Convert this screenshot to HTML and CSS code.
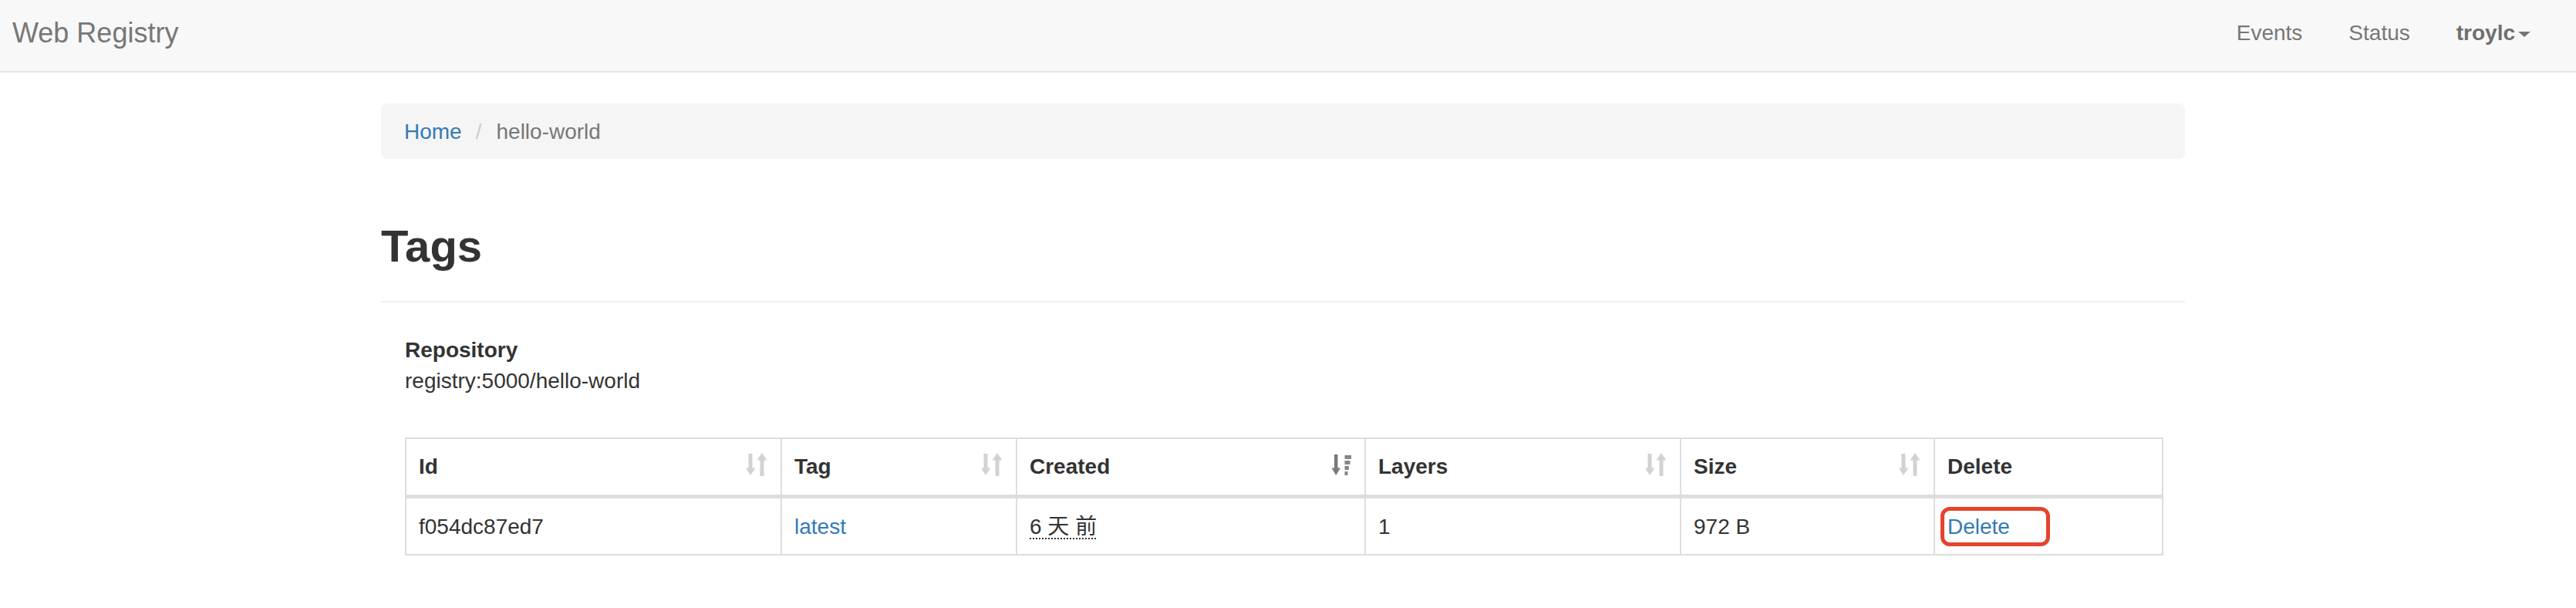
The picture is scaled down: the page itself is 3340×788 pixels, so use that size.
FILE: index.html
```html
<!DOCTYPE html>
<html lang="en">
<head>
<meta charset="utf-8">
<title>Web Registry</title>
<link rel="stylesheet" href="styles.css">
</head>
<body>
<header class="navbar">
  <a class="brand" href="#">Web Registry</a>
  <ul class="nav">
    <li><a href="#">Events</a></li>
    <li><a href="#">Status</a></li>
    <li><a class="user" href="#">troylc<span class="caret"></span></a></li>
  </ul>
</header>

<main class="container">
  <ol class="breadcrumb">
    <li><a href="#">Home</a></li>
    <li class="sep">/</li>
    <li class="active">hello-world</li>
  </ol>

  <div class="page-header">
    <h1>Tags</h1>
  </div>

  <div class="content">
    <dl class="repo">
      <dt>Repository</dt>
      <dd>registry:5000/hello-world</dd>
    </dl>

    <table class="tags">
      <colgroup>
        <col class="c-id">
        <col class="c-tag">
        <col class="c-created">
        <col class="c-layers">
        <col class="c-size">
        <col class="c-delete">
      </colgroup>
      <thead>
        <tr>
          <th><div class="th"><span>Id</span>
            <svg class="sort" viewBox="0 0 28 30" width="28" height="30"><rect x="3.5" y="1" width="5" height="19" fill="#d2d2d2"/><polygon points="0,19.5 12.5,19.5 6,29" fill="#d2d2d2"/><polygon points="14.5,9.5 27.5,9.5 21,0" fill="#d2d2d2"/><rect x="18.5" y="9" width="5" height="21" fill="#d2d2d2"/></svg></div></th>
          <th><div class="th"><span>Tag</span>
            <svg class="sort" viewBox="0 0 28 30" width="28" height="30"><rect x="3.5" y="1" width="5" height="19" fill="#d2d2d2"/><polygon points="0,19.5 12.5,19.5 6,29" fill="#d2d2d2"/><polygon points="14.5,9.5 27.5,9.5 21,0" fill="#d2d2d2"/><rect x="18.5" y="9" width="5" height="21" fill="#d2d2d2"/></svg></div></th>
          <th><div class="th"><span>Created</span>
            <svg class="sort" viewBox="0 0 28 30" width="28" height="30"><rect x="6" y="2" width="4.5" height="18" fill="#7a7a7a"/><polygon points="2.5,19.5 14,19.5 8.2,29" fill="#7a7a7a"/><rect x="19.5" y="3" width="8.5" height="5" fill="#858585"/><rect x="19.5" y="10" width="7" height="5" fill="#858585"/><rect x="19.5" y="17" width="5.5" height="5" fill="#858585"/><rect x="19.5" y="24" width="4" height="5" fill="#858585"/></svg></div></th>
          <th><div class="th"><span>Layers</span>
            <svg class="sort" viewBox="0 0 28 30" width="28" height="30"><rect x="3.5" y="1" width="5" height="19" fill="#d2d2d2"/><polygon points="0,19.5 12.5,19.5 6,29" fill="#d2d2d2"/><polygon points="14.5,9.5 27.5,9.5 21,0" fill="#d2d2d2"/><rect x="18.5" y="9" width="5" height="21" fill="#d2d2d2"/></svg></div></th>
          <th><div class="th"><span>Size</span>
            <svg class="sort" viewBox="0 0 28 30" width="28" height="30"><rect x="3.5" y="1" width="5" height="19" fill="#d2d2d2"/><polygon points="0,19.5 12.5,19.5 6,29" fill="#d2d2d2"/><polygon points="14.5,9.5 27.5,9.5 21,0" fill="#d2d2d2"/><rect x="18.5" y="9" width="5" height="21" fill="#d2d2d2"/></svg></div></th>
          <th><div class="th"><span>Delete</span></div></th>
        </tr>
      </thead>
      <tbody>
        <tr>
          <td>f054dc87ed7</td>
          <td><a href="#">latest</a></td>
          <td><abbr title="2017-05-01">6 天 前</abbr></td>
          <td>1</td>
          <td>972 B</td>
          <td><a class="mark" href="#">Delete</a></td>
        </tr>
      </tbody>
    </table>
  </div>
</main>
</body>
</html>
```

FILE: styles.css
```css
*, *::before, *::after { box-sizing: border-box; }

html, body {
  margin: 0;
  padding: 0;
  background: #fff;
}

body {
  font-family: "Liberation Sans", Arial, "Noto Sans CJK SC", sans-serif;
  font-size: 28px;
  line-height: 40px;
  color: #333;
}

a { color: #337ab7; text-decoration: none; }

/* ---------- navbar ---------- */
.navbar {
  display: flex;
  justify-content: space-between;
  align-items: flex-start;
  height: 94px;
  background: #f8f8f8;
  border-bottom: 2px solid #e7e7e7;
}

.brand {
  padding-left: 16px;
  font-size: 36px;
  line-height: 86px;
  color: #777;
}

.nav {
  display: flex;
  list-style: none;
  margin: 0;
  padding: 0 29px 0 0;
}

.nav a {
  display: flex;
  align-items: center;
  padding: 0 30px;
  line-height: 85px;
  color: #777;
}

.nav .user {
  font-weight: bold;
  color: #6f6f6f;
}

.caret {
  display: inline-block;
  margin-left: 4px;
  margin-top: 4px;
  width: 0;
  height: 0;
  border-top: 7px solid #777;
  border-left: 8px solid transparent;
  border-right: 8px solid transparent;
}

/* ---------- container ---------- */
.container {
  width: 2339px;
  margin-left: 494px;
}

.breadcrumb {
  display: flex;
  list-style: none;
  margin: 40px 0 0;
  padding: 17px 30px 15px;
  background: #f5f5f5;
  border-radius: 8px;
}

.breadcrumb .sep {
  color: #ccc;
  padding: 0 19px 0 18px;
}

.breadcrumb .active { color: #777; }

.page-header {
  margin-top: 80px;
  padding-bottom: 18px;
  border-bottom: 2px solid #eee;
}

.page-header h1 {
  margin: 0 0 20px;
  font-size: 58px;
  line-height: 66px;
  font-weight: bold;
  color: #333;
}

/* ---------- content ---------- */
.content {
  padding: 42px 30px 0 31px;
}

.repo {
  margin: 0 0 53px;
}

.repo dt { font-weight: bold; }
.repo dd { margin: 0; }

.tags {
  width: 2278px;
  table-layout: fixed;
  border-collapse: collapse;
  border: 2px solid #ddd;
}

.c-id { width: 487px; }
.c-tag { width: 305px; }
.c-created { width: 452px; }
.c-layers { width: 409px; }
.c-size { width: 329px; }
.c-delete { width: 296px; }

.tags th,
.tags td {
  padding: 16px;
  border: 2px solid #ddd;
  text-align: left;
  vertical-align: top;
}

.tags thead th {
  border-bottom-width: 5px;
  font-weight: bold;
}

.tags tbody td {
  padding: 17px 16px 15px;
}

.th {
  display: flex;
  justify-content: space-between;
  align-items: center;
}

.sort {
  display: block;
  flex: none;
  margin-top: -6px;
  margin-right: 1px;
}

abbr {
  text-decoration: underline dotted #333;
  text-underline-offset: 5px;
  text-decoration-thickness: 2px;
}

.mark {
  position: relative;
  display: inline-block;
  vertical-align: top;
}

.mark::after {
  content: "";
  position: absolute;
  left: -9px;
  top: -6px;
  width: 142px;
  height: 51px;
  border: 5px solid #e5432d;
  border-radius: 12px;
}
```
